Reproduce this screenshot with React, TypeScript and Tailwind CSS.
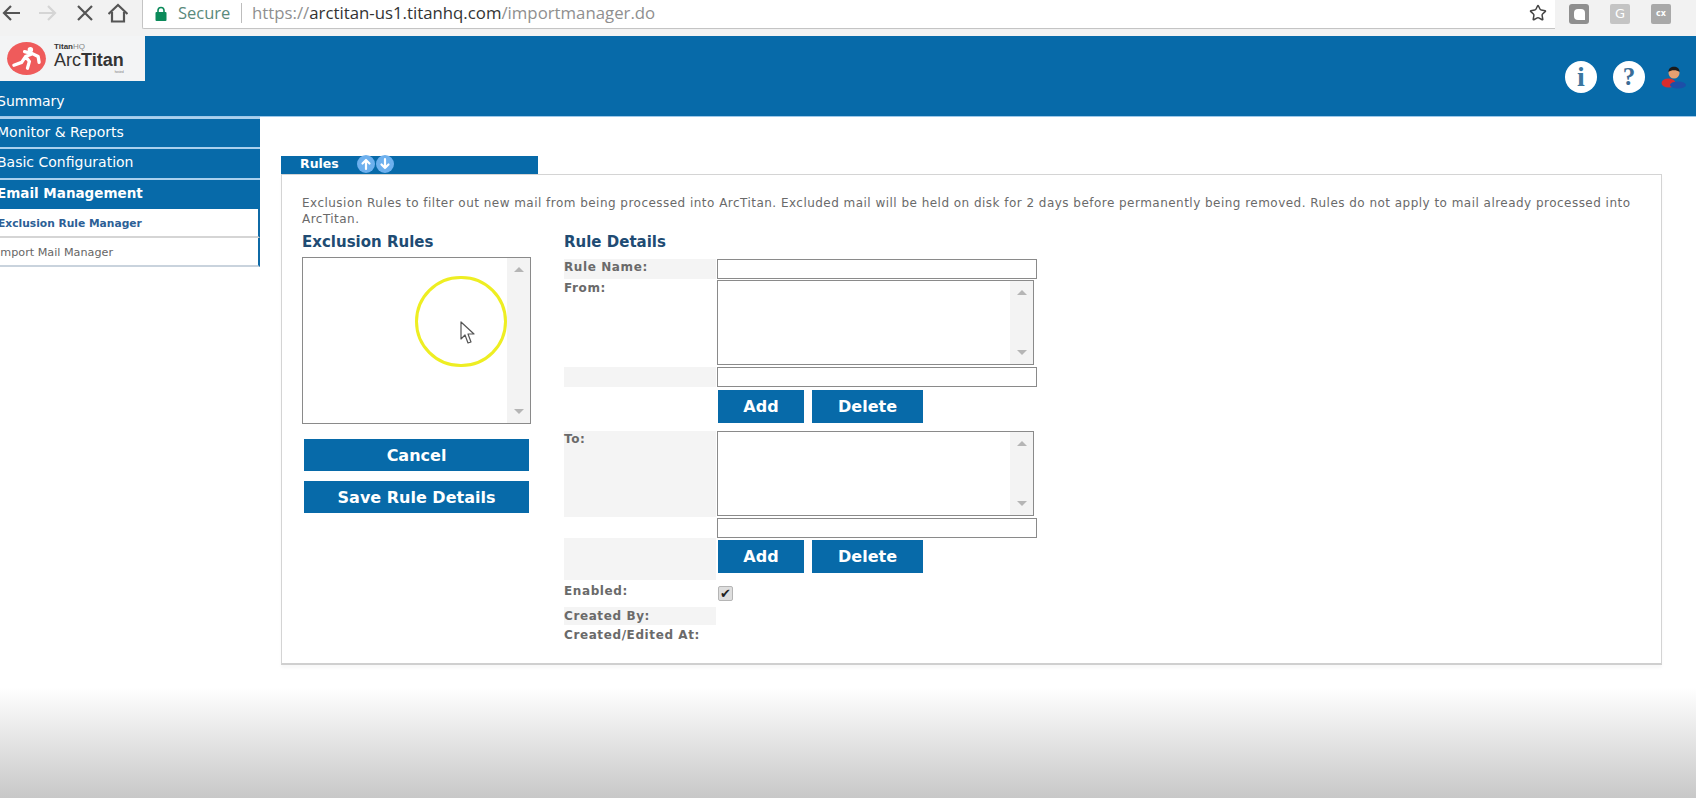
import { Star } from 'lucide-react'

const BLUE = 'bg-[#076aa9]'

function Scrollbar() {
  return (
    <div className="flex h-full w-[23px] flex-col items-center justify-between bg-[#f3f3f3] py-[9px]">
      <div className="h-0 w-0 border-x-[5px] border-b-[5px] border-x-transparent border-b-[#b5b5b5]" />
      <div className="h-0 w-0 border-x-[5px] border-t-[5px] border-x-transparent border-t-[#b5b5b5]" />
    </div>
  )
}

function ActionButtons() {
  return (
    <div className="flex gap-[8px] pl-px">
      <button className={`${BLUE} h-[33px] w-[86px] text-[16px] font-bold text-white`}>Add</button>
      <button className={`${BLUE} h-[33px] w-[111px] text-[16px] font-bold text-white`}>Delete</button>
    </div>
  )
}

function Row({ label, shaded, className, labelClass = '', children }: { label?: string; shaded?: boolean; className: string; labelClass?: string; children?: React.ReactNode }) {
  return (
    <div className={`flex ${className}`}>
      <div className={`w-[152px] shrink-0 whitespace-nowrap text-[12px] font-bold leading-[17px] tracking-[0.6px] text-[#6a6a6a] ${shaded ? 'bg-[#f4f4f4]' : ''} ${labelClass}`}>
        {label}
      </div>
      <div className="ml-px w-[320px]">{children}</div>
    </div>
  )
}

function TextBox() {
  return <div className="h-[20px] w-[320px] border border-[#8a8a8a] bg-white" />
}

function AreaBox() {
  return (
    <div className="flex h-[85px] w-[317px] justify-end border border-[#8a8a8a] bg-white">
      <Scrollbar />
    </div>
  )
}

function ArrowCircle({ d }: { d: string }) {
  return (
    <svg viewBox="0 0 18 18" className="h-[18px] w-[18px]">
      <circle cx="9" cy="9" r="9" fill="#6db0ee" />
      <path d={d} fill="none" stroke="#fff" strokeWidth="2.2" strokeLinecap="round" strokeLinejoin="round" />
    </svg>
  )
}

function NavIcon({ d, className }: { d: string; className: string }) {
  return (
    <svg viewBox="0 0 20 20" className={`h-[20px] w-[20px] shrink-0 ${className}`}>
      <path d={d} fill="none" stroke="currentColor" strokeWidth="2.2" strokeLinejoin="miter" />
    </svg>
  )
}

export default function App() {
  return (
    <div className="relative flex h-[798px] w-[1696px] flex-col overflow-hidden bg-white font-['DejaVu_Sans',sans-serif]">
      {/* browser bar */}
      <div className="flex h-[36px] shrink-0 items-start bg-[#f2f2f2]">
        <div className="flex h-[26px] w-[142px] items-center text-[#555]">
          <NavIcon d="M19 10 H3 M10 3 L3 10 L10 17" className="ml-[1px]" />
          <NavIcon d="M1 10 H17 M10 3 L17 10 L10 17" className="ml-[17px] text-[#d5d5d5]" />
          <NavIcon d="M3 3 L17 17 M17 3 L3 17" className="ml-[17px]" />
          <NavIcon d="M0.5 11 L10 2 L19.5 11 M4 9 V18.5 H16 V9" className="ml-[13px]" />
        </div>
        <div className="flex h-[29px] w-[1413px] items-center rounded-bl-[2px] border-b border-l border-[#c4c4c4] bg-white pb-[2px] pl-[12px] font-['Open_Sans',sans-serif] text-[16.5px]">
          <svg viewBox="0 0 12 15" className="h-[15px] w-[12px] shrink-0">
            <path d="M3 7 V4.5 C3 0.5 9 0.5 9 4.5 V7" fill="none" stroke="#0b8a5a" strokeWidth="1.6" />
            <rect x="0.5" y="6" width="11" height="9" rx="1" fill="#0b8a5a" />
          </svg>
          <span className="ml-[11px] w-[63px] text-[#5a8a7c]">Secure</span>
          <span className="h-[20px] w-px bg-[#bdbdbd]" />
          <span className="ml-[10px] text-[16.8px] text-[#8f8f8f]">
            https://<span className="text-[#333]">arctitan-us1.titanhq.com</span>/importmanager.do
          </span>
          <Star size={18} strokeWidth={2} className="ml-auto mr-[8px] text-[#444]" />
        </div>
        <div className="flex h-[28px] flex-1 items-center gap-[21px] pl-[14px]">
          <div className="flex h-[20px] w-[20px] items-center justify-center rounded-[3px] bg-[#8f8f8f]">
            <div className="h-[11px] w-[11px] rounded-[4px] rounded-br-none bg-white" />
          </div>
          <div className="flex h-[20px] w-[20px] items-center justify-center rounded-[2px] bg-[#c4c4c4] text-[13px] text-white">G</div>
          <div className="flex h-[20px] w-[20px] items-center justify-center rounded-[2px] bg-[#a9a9a9] text-[8px] font-bold text-white">cx</div>
        </div>
      </div>

      {/* header */}
      <div className={`${BLUE} flex h-[81px] shrink-0 justify-between border-b border-[#9cc8ea]`}>
        <div className="flex w-[145px] flex-col">
          <div className="flex h-[45px] shrink-0 items-center bg-[#f3f4f5] pl-[7px]">
            <svg viewBox="0 0 40 34" className="h-[33px] w-[39px] shrink-0">
              <ellipse cx="20" cy="17" rx="20" ry="17" fill="#ef5b5b" />
              <path d="M7 24 L15 21 L19 15 L26 12 L32 15 L33 21 M19 15 L23 20 L21 27 M26 12 L18 10" fill="none" stroke="#fff" strokeWidth="3.4" strokeLinecap="round" strokeLinejoin="round" />
              <circle cx="24" cy="8" r="2.8" fill="#fff" />
            </svg>
            <div className="ml-[8px] flex flex-col font-['Liberation_Sans',sans-serif] leading-none text-[#333]">
              <span className="text-[8px] font-bold leading-[8px]">Titan<span className="font-normal text-[#888]">HQ</span></span>
              <span className="text-[18px] leading-[19px]">Arc<span className="font-bold">Titan</span></span>
              <span className="self-end text-[3px] leading-[4px] text-[#777]">hosted</span>
            </div>
          </div>
          <div className="mt-auto flex h-[28px] items-center overflow-hidden pb-[2px]">
            <span className="-ml-[3px] whitespace-nowrap text-[14px] text-white">Summary</span>
          </div>
        </div>
        <div className="flex items-center gap-[16px] pr-[9px] pt-[1px]">
          <div className="flex h-[32px] w-[32px] items-center justify-center rounded-full bg-white font-['Liberation_Serif',serif] text-[28px] font-bold text-[#3a769f]">i</div>
          <div className="flex h-[32px] w-[32px] items-center justify-center rounded-full bg-white font-['Liberation_Serif',serif] text-[25px] font-bold text-[#3c6d96]">?</div>
          <svg viewBox="0 0 26 26" className="h-[26px] w-[26px]">
            <ellipse cx="7.5" cy="19" rx="7" ry="4.5" fill="#d92c2c" />
            <ellipse cx="17" cy="21" rx="8" ry="3.5" fill="#1c4fa8" />
            <circle cx="13" cy="9" r="5.5" fill="#e8a070" />
            <path d="M7.5 8 C7 1 19 1 18.5 8 C16 5.5 10 5.5 7.5 8 Z" fill="#1b1b1b" />
          </svg>
        </div>
      </div>

      <div className="flex min-h-0 flex-1">
        {/* sidebar */}
        <div className="w-[260px] shrink-0 overflow-hidden whitespace-nowrap text-[14px] text-white">
          <div className={`${BLUE} flex h-[30px] items-center border-t-2 border-[#a9d0ee] pb-[2px]`}>
            <span className="-ml-[3px]">Monitor &amp; Reports</span>
          </div>
          <div className={`${BLUE} flex h-[31px] items-center border-t-2 border-[#a9d0ee] pb-[2px]`}>
            <span className="-ml-[3px]">Basic Configuration</span>
          </div>
          <div className={`${BLUE} flex h-[31px] items-center border-t-2 border-[#a9d0ee] pb-[2px]`}>
            <span className="-ml-[3px] text-[13.5px] font-bold">Email Management</span>
          </div>
          <div className="flex h-[29px] items-center border-r-2 border-b-2 border-r-[#0f6aa6] border-b-[#d5d5d5] bg-white pt-[4px] text-[10.7px] font-bold text-[#2c6096]">
            <span className="-ml-[2px]">Exclusion Rule Manager</span>
          </div>
          <div className="flex h-[29px] items-center border-r-2 border-b-2 border-r-[#0f6aa6] border-b-[#c9d3dd] bg-white pt-[4px] text-[11.2px] text-[#666]">
            <span className="-ml-[3px]">Import Mail Manager</span>
          </div>
        </div>

        {/* main */}
        <div className="flex flex-1 flex-col pl-[21px] pt-[39px]">
          <div className={`${BLUE} flex h-[18px] w-[257px] items-center pb-px pl-[19px]`}>
            <span className="text-[12.5px] font-bold text-white">Rules</span>
            <div className="-mt-[2px] ml-[18px] flex gap-[1px]">
              <ArrowCircle d="M9 14 V5 M5.5 8.5 L9 5 L12.5 8.5" />
              <ArrowCircle d="M9 4 V13 M5.5 9.5 L9 13 L12.5 9.5" />
            </div>
          </div>
          <div className="h-[491px] w-[1381px] border border-b-2 border-[#d4d4d4] border-b-[#cfcfcf] px-[20px] pt-[20px] shadow-[0_3px_3px_rgba(0,0,0,0.03)]">
            <p className="w-[1340px] text-[12px] leading-[16px] tracking-[0.47px] text-[#6a6a6a]">
              Exclusion Rules to filter out new mail from being processed into ArcTitan. Excluded mail will be held on disk for 2 days before permanently being removed. Rules do not apply to mail already processed into ArcTitan.
            </p>
            <div className="mt-[4px] flex">
              <div className="w-[229px] shrink-0">
                <h2 className="h-[26px] text-[15px] font-bold leading-[22px] text-[#204b73]">Exclusion Rules</h2>
                <div className="flex h-[167px] justify-end border border-[#8a8a8a] bg-white">
                  <Scrollbar />
                </div>
                <button className={`${BLUE} ml-[2px] mt-[15px] block h-[32px] w-[225px] pt-[2px] text-[16px] font-bold text-white`}>Cancel</button>
                <button className={`${BLUE} ml-[2px] mt-[10px] block h-[32px] w-[225px] pt-[2px] text-[16px] font-bold text-white`}>Save Rule Details</button>
              </div>
              <div className="ml-[33px] w-[473px]">
                <h2 className="h-[28px] text-[15px] font-bold leading-[22px] text-[#204b73]">Rule Details</h2>
                <Row label="Rule Name:" shaded className="h-[20px]"><TextBox /></Row>
                <Row label="From:" className="h-[88px] pt-px"><AreaBox /></Row>
                <Row shaded className="h-[20px]"><TextBox /></Row>
                <Row className="h-[44px] pt-[3px]"><ActionButtons /></Row>
                <Row label="To:" shaded className="h-[86px]"><AreaBox /></Row>
                <Row className="h-[21px] pt-px"><TextBox /></Row>
                <Row shaded className="h-[42px]"><div className="pt-[2px]"><ActionButtons /></div></Row>
                <Row label="Enabled:" className="h-[27px] pt-[3px]">
                  <div className="ml-px mt-[3px] flex h-[15px] w-[15px] items-center justify-center rounded-[2px] border border-[#b5b5b5] bg-[#dedede] text-[13px] leading-none text-[#222]">✔</div>
                </Row>
                <Row label="Created By:" shaded labelClass="pt-px" className="h-[18px]" />
                <Row label="Created/Edited At:" labelClass="pt-[2px]" className="h-[18px]" />
              </div>
            </div>
          </div>
        </div>
      </div>

      {/* bottom fade of the video */}
      <div className="pointer-events-none absolute left-0 top-[688px] h-[110px] w-[1696px] bg-gradient-to-b from-transparent to-[#c8c8c8]" />

      {/* recorded mouse cursor */}
      <div className="pointer-events-none absolute left-[415px] top-[276px] h-[91px] w-[92px] rounded-full border-[3px] border-[#eeee22]" />
      <svg viewBox="0 0 16 24" className="pointer-events-none absolute left-[460px] top-[321px] h-[24px] w-[16px]">
        <path d="M1 1 L1 18 L5 14 L8 22 L11 21 L8 13 L14 13 Z" fill="#fff" stroke="#555" strokeWidth="1.2" strokeLinejoin="round" />
      </svg>
    </div>
  )
}
